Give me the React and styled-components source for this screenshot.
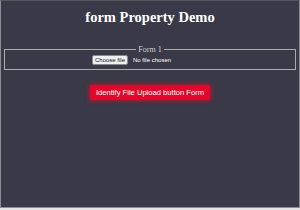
import React from "react";
import styled, { createGlobalStyle } from "styled-components";

const Global = createGlobalStyle`
  html, body { margin: 0; padding: 0; background: #e4e4e6; }
`;

const Page = styled.div`
  box-sizing: border-box;
  height: 208px;
  border: 1px solid #8c8c94;
  border-top-color: #55555e;
  background: #3a3947;
  display: flex;
  flex-direction: column;
  align-items: stretch;
  font-family: "Liberation Serif", serif;
`;

const Title = styled.h1`
  margin: 8px 0 0;
  text-align: center;
  color: #ffffff;
  font-size: 14.5px;
  font-weight: bold;
  line-height: 16px;
`;

const Fieldset = styled.fieldset`
  margin: 20px 3px 0;
  padding: 1px 0 4px;
  border: 1px solid #a9a9b0;
  display: flex;
  justify-content: center;
`;

const Legend = styled.legend`
  margin: 0 auto;
  padding: 0 2px;
  color: #d0d0d6;
  font-size: 8px;
  line-height: 9px;
`;

const FileLabel = styled.label`
  width: 116px;
  display: flex;
  align-items: center;
  gap: 5px;
  font-family: "Liberation Sans", Arial, sans-serif;
  font-size: 6px;
  color: #ffffff;
  cursor: pointer;
`;

const HiddenInput = styled.input`
  display: none;
`;

const ChooseButton = styled.span`
  display: inline-block;
  padding: 0.5px 2px;
  background: #efefef;
  color: #111;
  border: 1px solid #8a8a8a;
  border-radius: 2px;
  line-height: 7px;
`;

const ButtonRow = styled.div`
  display: flex;
  justify-content: center;
  margin-top: 15px;
`;

const RedButton = styled.button`
  background: #e3062c;
  color: #ffffff;
  border: none;
  border-radius: 2px;
  height: 15px;
  width: 120px;
  padding: 0;
  font-family: "Liberation Sans", Arial, sans-serif;
  font-size: 7.6px;
  box-shadow: 0 0 4px 1px rgba(230, 10, 40, 0.7);
`;

export default function App() {
  return (
    <>
      <Global />
      <Page>
        <Title>form Property Demo</Title>
        <Fieldset>
          <Legend>Form 1</Legend>
          <FileLabel>
            <HiddenInput type="file" />
            <ChooseButton>Choose file</ChooseButton>
            <span>No file chosen</span>
          </FileLabel>
        </Fieldset>
        <ButtonRow>
          <RedButton>Identify File Upload button Form</RedButton>
        </ButtonRow>
      </Page>
    </>
  );
}
